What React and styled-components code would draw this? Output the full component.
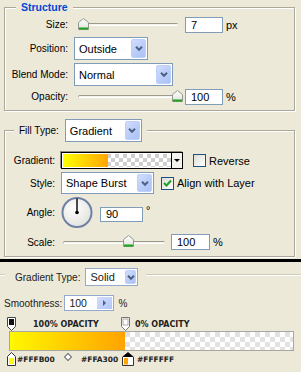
import React from "react";
import styled, { createGlobalStyle } from "styled-components";

const GlobalStyle = createGlobalStyle`
  html, body {
    margin: 0;
    padding: 0;
    background: #ece9d8;
  }
  body {
    font-family: "Liberation Sans", Arial, sans-serif;
    font-size: 10px;
    color: #000;
  }
`;

function Chevron({ color = "#4d6185" }) {
  return (
    <svg width="8" height="5" viewBox="0 0 8 5">
      <polyline points="1,0.8 4,3.8 7,0.8" fill="none" stroke={color} strokeWidth="2" />
    </svg>
  );
}

function Thumb() {
  return (
    <svg width="11" height="12" viewBox="0 0 11 12">
      <defs>
        <linearGradient id="thumbFill" x1="0" y1="0" x2="0" y2="1">
          <stop offset="0" stopColor="#ffffff" />
          <stop offset="1" stopColor="#e2e2da" />
        </linearGradient>
      </defs>
      <path d="M0.5 4.5L5.5 0.5L10.5 4.5V11.5H0.5Z" fill="url(#thumbFill)" stroke="#8e9a8e" />
      <rect x="1" y="9.5" width="9" height="2" fill="#21a121" />
    </svg>
  );
}

function Dial() {
  return (
    <svg width="32" height="33" viewBox="0 0 32 33">
      <defs>
        <radialGradient id="dialFill" cx="0.4" cy="0.35" r="0.7">
          <stop offset="0" stopColor="#ffffff" />
          <stop offset="1" stopColor="#e1e1dc" />
        </radialGradient>
      </defs>
      <circle cx="16" cy="16.5" r="14.5" fill="url(#dialFill)" stroke="#6f80a6" strokeWidth="2" />
      <line x1="16" y1="16.5" x2="16" y2="2.5" stroke="#000" strokeWidth="1.4" />
      <circle cx="16" cy="16.5" r="1.8" fill="#000" />
    </svg>
  );
}

function TopStop({ fill, stroke }) {
  return (
    <svg width="9" height="14" viewBox="0 0 9 14">
      <path d="M0.5 0.5H8.5V9.5L4.5 13.5L0.5 9.5Z" fill="#fff" stroke={stroke} />
      <rect x="2" y="2" width="5" height="6" fill={fill} stroke={fill === "#fff" ? "#999" : "none"} strokeWidth="0.8" />
    </svg>
  );
}

function BottomStop({ fill }) {
  return (
    <svg width="9" height="14" viewBox="0 0 9 14">
      <path d="M4.5 0.5L8.5 4.5V13.5H0.5V4.5Z" fill="#fff" stroke="#333" />
      <rect x="2" y="6" width="5" height="6" fill={fill} />
    </svg>
  );
}

function SplitStop() {
  return (
    <svg width="12" height="14" viewBox="0 0 12 14">
      <path d="M6 0.5L11.5 5V13.5H0.5V5Z" fill="#fff" stroke="#333" />
      <path d="M6 0.5L11.5 5H0.5Z" fill="#000" />
      <rect x="2" y="6" width="4" height="6.5" fill="#ffa300" />
    </svg>
  );
}

function Check({ checked }) {
  return (
    <CheckBox>
      {checked && (
        <svg width="9" height="9" viewBox="0 0 9 9">
          <polyline points="1,4 3.5,6.5 8,1.5" fill="none" stroke="#21a121" strokeWidth="2" />
        </svg>
      )}
    </CheckBox>
  );
}

function Slider({ width, pos, ml }) {
  return (
    <SliderWrap $w={width} $ml={ml}>
      <Track />
      <ThumbHolder style={{ left: Math.round(pos * (width - 6)) }}>
        <Thumb />
      </ThumbHolder>
    </SliderWrap>
  );
}

function Select({ width, height, children }) {
  return (
    <SelectBox $w={width} $h={height}>
      <SelectText>{children}</SelectText>
      <ArrowBtn>
        <Chevron />
      </ArrowBtn>
    </SelectBox>
  );
}

export default function App() {
  return (
    <Page>
      <GlobalStyle />

      <Group $h={104} $pt={8}>
        <Legend $left={11} $top={-7} $px={5}>
          <LegendTitle>Structure</LegendTitle>
        </Legend>
        <Row $h={17}>
          <Label $w={63} $gap={6}>Size:</Label>
          <Slider width={100} pos={0} ml={4} />
          <Field $w={38} $h={16} $ml={7}>7</Field>
          <Unit>px</Unit>
        </Row>
        <Row $h={23} $mt={4}>
          <Label $w={63} $gap={6}>Position:</Label>
          <Select width={74} height={23}>Outside</Select>
        </Row>
        <Row $h={23} $mt={3}>
          <Label $w={63} $gap={6}>Blend Mode:</Label>
          <Select width={99} height={23}>Normal</Select>
        </Row>
        <Row $h={17} $mt={2}>
          <Label $w={63} $gap={6}>Opacity:</Label>
          <Slider width={100} pos={1} ml={4} />
          <Field $w={38} $h={16} $ml={7}>100</Field>
          <Unit>%</Unit>
        </Row>
      </Group>

      <Group $h={127} $pt={21} $mt={19}>
        <Legend $left={9} $top={-12} $px={5}>
          <span>Fill Type:</span>
          <Select width={77} height={23}>Gradient</Select>
        </Legend>
        <Row $h={17}>
          <Label $w={50} $gap={6}>Gradient:</Label>
          <GradientBox>
            <Swatch />
            <SwatchDrop>
              <DownTriangle />
            </SwatchDrop>
          </GradientBox>
          <CheckLabel $ml={10}>
            <Check />
            <span>Reverse</span>
          </CheckLabel>
        </Row>
        <Row $h={22} $mt={3}>
          <Label $w={50} $gap={6}>Style:</Label>
          <Select width={93} height={22}>Shape Burst</Select>
          <CheckLabel $ml={7}>
            <Check checked />
            <span>Align with Layer</span>
          </CheckLabel>
        </Row>
        <Row $h={33} $mt={2}>
          <Label $w={50} $gap={6}>Angle:</Label>
          <Dial />
          <Field $w={43} $h={15} $ml={7} $mt={3}>90</Field>
          <Degree>°</Degree>
        </Row>
        <Row $h={16} $mt={5}>
          <Label $w={50} $gap={6}>Scale:</Label>
          <Slider width={102} pos={0.62} ml={2} />
          <Field $w={39} $h={16} $ml={6}>100</Field>
          <Unit>%</Unit>
        </Row>
      </Group>

      <Rule />

      <Editor>
        <SectionHead>
          <HeadLine $w={5} />
          <HeadLegend>
            <SmallLabel>Gradient Type:</SmallLabel>
            <MiniSelect>
              <SelectText>Solid</SelectText>
              <MiniArrow>
                <Chevron />
              </MiniArrow>
            </MiniSelect>
          </HeadLegend>
          <HeadLine />
        </SectionHead>

        <SmoothRow>
          <SmallLabel>Smoothness:</SmallLabel>
          <SpinField>
            <SpinText>100</SpinText>
            <SpinBtn>
              <RightTriangle />
            </SpinBtn>
          </SpinField>
          <SmallLabel $ml={2}>%</SmallLabel>
        </SmoothRow>

        <StopRow $mt={6}>
          <StopSlot $ml={7}>
            <TopStop fill="#111" stroke="#444" />
          </StopSlot>
          <Caption $ml={17} $w={88}>100% OPACITY</Caption>
          <StopSlot>
            <TopStop fill="#fff" stroke="#777" />
          </StopSlot>
          <Caption $ml={5}>0% OPACITY</Caption>
        </StopRow>

        <GradientBar />

        <StopRow $mt={1}>
          <StopSlot $ml={7}>
            <BottomStop fill="#fffb00" />
          </StopSlot>
          <Caption $ml={1} $w={48} $size={7.5}>#FFFB00</Caption>
          <Midpoint />
          <Caption $ml={10} $w={41} $size={7.5}>#FFA300</Caption>
          <StopSlot>
            <SplitStop />
          </StopSlot>
          <Caption $ml={3} $size={7.5}>#FFFFFF</Caption>
        </StopRow>
      </Editor>
    </Page>
  );
}

const Page = styled.div`
  width: 301px;
  height: 372px;
  overflow: hidden;
  box-sizing: border-box;
  padding-top: 7px;
  display: flex;
  flex-direction: column;
`;

const Group = styled.div`
  position: relative;
  margin: ${(p) => p.$mt || 0}px 0 0 4px;
  width: 291px;
  height: ${(p) => p.$h}px;
  flex: none;
  box-sizing: border-box;
  border: 1px solid #aca899;
  box-shadow: inset 1px 1px 0 #fff, 1px 1px 0 #fff;
  padding-top: ${(p) => p.$pt}px;
  display: flex;
  flex-direction: column;
`;

const Legend = styled.div`
  position: absolute;
  left: ${(p) => p.$left}px;
  top: ${(p) => p.$top}px;
  padding: 0 ${(p) => p.$px}px;
  background: #ece9d8;
  display: flex;
  align-items: center;
  gap: 6px;
`;

const LegendTitle = styled.span`
  color: #0046d5;
  font-weight: bold;
  font-size: 10.5px;
  line-height: 13px;
`;

const Row = styled.div`
  display: flex;
  align-items: center;
  height: ${(p) => p.$h}px;
  margin-top: ${(p) => p.$mt || 0}px;
  flex: none;
`;

const Label = styled.div`
  width: ${(p) => p.$w}px;
  margin-right: ${(p) => p.$gap}px;
  flex: none;
  text-align: right;
  white-space: nowrap;
`;

const SliderWrap = styled.div`
  position: relative;
  width: ${(p) => p.$w}px;
  margin-left: ${(p) => p.$ml || 0}px;
  height: 12px;
  flex: none;
  display: flex;
  align-items: center;
`;

const Track = styled.div`
  width: 100%;
  height: 1px;
  border-top: 1px solid #9d9a8c;
  border-bottom: 1px solid #fff;
  border-left: 1px solid #b5b2a4;
  border-radius: 2px;
  background: #f3f2ec;
`;

const ThumbHolder = styled.div`
  position: absolute;
  top: -1px;
  width: 11px;
  height: 12px;
`;

const Field = styled.div`
  width: ${(p) => p.$w}px;
  height: ${(p) => p.$h}px;
  margin-left: ${(p) => p.$ml || 0}px;
  margin-top: ${(p) => p.$mt || 0}px;
  flex: none;
  box-sizing: border-box;
  border: 1px solid #7f9db9;
  background: #fff;
  padding-left: 5px;
  display: flex;
  align-items: center;
  font-size: 11px;
`;

const Unit = styled.span`
  margin-left: 3px;
  font-size: 11px;
`;

const Degree = styled.span`
  align-self: flex-start;
  margin: 8px 0 0 3px;
  font-size: 11px;
`;

const SelectBox = styled.div`
  width: ${(p) => p.$w}px;
  height: ${(p) => p.$h}px;
  flex: none;
  box-sizing: border-box;
  border: 1px solid #7f9db9;
  background: #fff;
  padding: 1px;
  display: flex;
`;

const SelectText = styled.div`
  flex: 1;
  display: flex;
  align-items: center;
  padding-left: 3px;
  font-size: 11px;
  white-space: nowrap;
`;

const ArrowBtn = styled.div`
  width: 15px;
  box-sizing: border-box;
  border: 1px solid #bdd0fb;
  border-radius: 2px;
  background: linear-gradient(135deg, #d2ddfe 0%, #b7cbf8 60%, #adc2f4 100%);
  display: flex;
  align-items: center;
  justify-content: center;
`;

const GradientBox = styled.div`
  width: 122px;
  height: 17px;
  flex: none;
  box-sizing: border-box;
  border: 1px solid #000;
  box-shadow: -1px -1px 0 #8f8d82;
  padding: 1px 0 1px 1px;
  background: #fff;
  display: flex;
`;

const Swatch = styled.div`
  flex: 1;
  background-color: #fff;
  background-image: linear-gradient(to right, #ffff00 0, #ffa500 45px, transparent 45px),
    linear-gradient(45deg, #cfcfcf 25%, transparent 25%, transparent 75%, #cfcfcf 75%),
    linear-gradient(45deg, #cfcfcf 25%, transparent 25%, transparent 75%, #cfcfcf 75%);
  background-size: 100% 100%, 8px 8px, 8px 8px;
  background-position: 0 0, 0 0, 4px 4px;
`;

const SwatchDrop = styled.div`
  width: 10px;
  margin: -1px 0;
  border-left: 1px solid #000;
  background: #f4f3ee;
  display: flex;
  align-items: center;
  justify-content: center;
`;

const DownTriangle = styled.span`
  width: 0;
  height: 0;
  border-left: 3px solid transparent;
  border-right: 3px solid transparent;
  border-top: 3px solid #000;
`;

const CheckLabel = styled.div`
  display: flex;
  align-items: center;
  gap: 3px;
  margin-left: ${(p) => p.$ml}px;
  font-size: 11px;
  white-space: nowrap;
`;

const CheckBox = styled.span`
  width: 13px;
  height: 13px;
  flex: none;
  box-sizing: border-box;
  border: 1px solid #1c5180;
  background: linear-gradient(135deg, #dcdcd7, #ffffff);
  display: flex;
  align-items: center;
  justify-content: center;
`;

const Rule = styled.div`
  margin-top: 2px;
  height: 3px;
  flex: none;
  background: #000;
`;

const Editor = styled.div`
  display: flex;
  flex-direction: column;
  color: #222;
`;

const SectionHead = styled.div`
  display: flex;
  align-items: flex-start;
  margin-top: 6px;
  height: 18px;
`;

const HeadLine = styled.div`
  width: ${(p) => (p.$w ? `${p.$w}px` : "auto")};
  flex: ${(p) => (p.$w ? "none" : 1)};
  margin-top: 6px;
  border-top: 1px solid #cfcbbb;
  border-bottom: 1px solid #fff;
`;

const HeadLegend = styled.div`
  display: flex;
  align-items: center;
  gap: 5px;
  height: 18px;
  padding: 0 8px 0 10px;
`;

const SmallLabel = styled.span`
  font-size: 10px;
  margin-left: ${(p) => p.$ml || 0}px;
  white-space: nowrap;
`;

const MiniSelect = styled.div`
  width: 53px;
  height: 18px;
  box-sizing: border-box;
  border: 1px solid #93aacc;
  background: #fff;
  padding: 1px;
  display: flex;
`;

const MiniArrow = styled(ArrowBtn)`
  width: 11px;
`;

const SmoothRow = styled.div`
  display: flex;
  align-items: center;
  gap: 2px;
  height: 16px;
  margin-top: 9px;
  padding-left: 4px;
`;

const SpinField = styled.div`
  width: 50px;
  height: 16px;
  box-sizing: border-box;
  border: 1px solid #93aacc;
  background: #fff;
  padding: 1px;
  display: flex;
`;

const SpinText = styled.div`
  flex: 1;
  display: flex;
  align-items: center;
  padding-left: 3px;
  font-size: 10.5px;
`;

const SpinBtn = styled.div`
  width: 15px;
  background: linear-gradient(135deg, #d2ddfe, #b2c6f6);
  display: flex;
  align-items: center;
  justify-content: center;
`;

const RightTriangle = styled.span`
  width: 0;
  height: 0;
  border-top: 3px solid transparent;
  border-bottom: 3px solid transparent;
  border-left: 3px solid #4d6185;
`;

const StopRow = styled.div`
  display: flex;
  align-items: center;
  height: 14px;
  margin-top: ${(p) => p.$mt || 0}px;
`;

const StopSlot = styled.div`
  display: flex;
  flex: none;
  margin-left: ${(p) => p.$ml || 0}px;
`;

const Caption = styled.span`
  width: ${(p) => (p.$w ? `${p.$w}px` : "auto")};
  flex: none;
  margin-left: ${(p) => p.$ml || 0}px;
  font-family: "DejaVu Sans", Verdana, sans-serif;
  font-weight: bold;
  font-size: ${(p) => p.$size || 8}px;
  color: #222;
  white-space: nowrap;
`;

const Midpoint = styled.span`
  align-self: flex-start;
  margin: 2px 0 0 0;
  width: 4px;
  height: 4px;
  flex: none;
  border: 1px solid #666;
  background: #fff;
  transform: rotate(45deg);
`;

const GradientBar = styled.div`
  margin-left: 9px;
  width: 285px;
  height: 20px;
  box-sizing: border-box;
  border: 1px solid #a8a8a0;
  background-color: #fff;
  background-image: linear-gradient(to right, #fff800 0, #ffa300 115px, transparent 115px),
    linear-gradient(45deg, #e2e2e2 25%, transparent 25%, transparent 75%, #e2e2e2 75%),
    linear-gradient(45deg, #e2e2e2 25%, transparent 25%, transparent 75%, #e2e2e2 75%);
  background-size: 100% 100%, 10px 10px, 10px 10px;
  background-position: 0 0, 0 0, 5px 5px;
`;
